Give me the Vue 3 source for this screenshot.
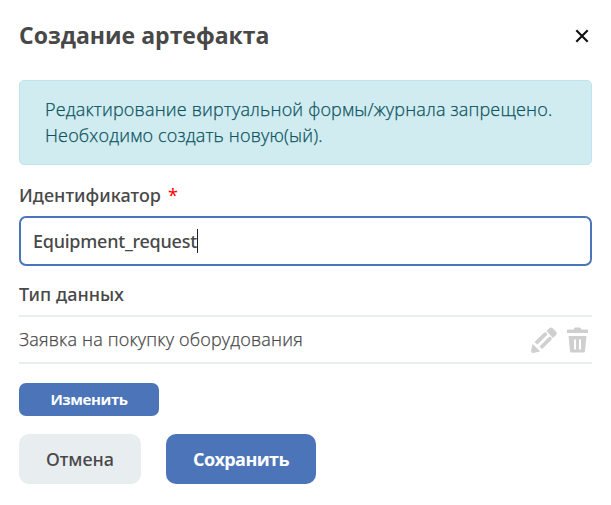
<script setup>
import { ref } from 'vue'
const notice = ['Редактирование виртуальной формы/журнала запрещено.', 'Необходимо создать новую(ый).']
const identifier = ref('Equipment_request')
</script>

<template>
  <main class="dialog">
    <header class="header">
      <h1 class="title">Создание артефакта</h1>
      <button class="close" aria-label="Закрыть">
        <svg width="14" height="14" viewBox="0 0 14 14"><path d="M1.3 1.3 12.700 12.700M12.700 1.3 1.3 12.700" fill="none" stroke="#111" stroke-width="2.1" /></svg>
      </button>
    </header>
    <div class="alert"><div v-for="line in notice" :key="line">{{ line }}</div></div>
    <div class="label"><span>Идентификатор</span><span class="required">*</span></div>
    <div class="field"><span class="value">{{ identifier }}</span><i class="caret"></i></div>
    <div class="label type">Тип данных</div>
    <div class="row">
      <span class="name">Заявка на покупку оборудования</span>
      <svg class="pencil" width="26" height="26" viewBox="0 0 26 26" fill="#cfcfcf">
        <path d="M15.500 4 18.500 1Q20 0 21.500 1L25.300 5Q26.400 6.500 25 8L22 11Z" />
        <path d="M3.500 15 13 5.700Q14.500 4.700 15.700 5.900Q16.700 7 15.700 8.300L6.500 17.500Z" />
        <path d="M8.500 19.500 17.700 10.300Q19.200 9.300 20.400 10.500Q21.300 11.700 20.300 12.900L11 22Z" />
        <path d="M1.500 17 3.500 18.700 7.300 22.500 9 24.500 2 26Q-.2 26 .2 23.500Z" />
      </svg>
      <svg class="trash" width="21" height="26" viewBox="0 0 21 26" fill="#cfcfcf">
        <path d="M1 2.500H7V1.500Q7 .5 8.500 .5H12.500Q14 .5 14 1.500V2.500H20Q21 2.500 21 3.500V6H0V3.500Q0 2.500 1 2.500Z" />
        <path fill-rule="evenodd" d="M1.500 9H19.500L18 24Q18 25.500 16.500 25.500H4.500Q3 25.500 3 24Z M7 12.500V22.500H9V12.500Z M12 12.500V22.500H14V12.500Z" />
      </svg>
    </div>
    <button class="change">Изменить</button>
    <footer class="actions"><button class="btn cancel">Отмена</button><button class="btn save">Сохранить</button></footer>
  </main>
</template>

<style>
body { background: #fff; }
</style>
<style scoped>
.dialog { box-sizing: border-box; height: 505px; padding: 18px 19px 0; font-family: "Open Sans", "Noto Sans", sans-serif; color: #484848; overflow: hidden; }
button { border: 0; padding: 0; font-family: inherit; }
.header { display: flex; justify-content: space-between; align-items: center; height: 36px; }
.title { margin: 0; font-size: 23px; font-weight: 700; line-height: 34px; padding-bottom: 2px; }
.close { display: flex; background: none; margin-right: 3px; }
.alert { box-sizing: border-box; height: 85px; margin-top: 26px; padding: 15px 25px; border: 1px solid #bee5eb; border-radius: 5px; background: #d1ecf1; color: #0c5460; font-size: 18px; font-weight: 300; line-height: 26px; letter-spacing: .16px; -webkit-text-stroke: .25px; white-space: nowrap; }
.label { display: flex; gap: 7px; height: 26px; margin-top: 17px; font-family: "Noto Sans", sans-serif; font-size: 18px; font-weight: 500; line-height: 26px; letter-spacing: .04px; }
.required { color: #f00; font-weight: 400; }
.field { box-sizing: border-box; display: flex; align-items: center; height: 50px; margin-top: 8px; padding: 0 12px; border: 2px solid #4b74b9; border-radius: 7px; font-family: "Noto Sans", sans-serif; font-size: 18px; font-weight: 500; letter-spacing: -.24px; }
.caret { width: 1px; height: 24px; background: #222; }
.type { margin-top: 15px; }
.row { box-sizing: border-box; display: flex; align-items: center; height: 49px; margin-top: 8px; border-top: 2px solid #e8edf0; border-bottom: 2px solid #e8edf0; font-size: 18px; font-weight: 300; }
.name { flex: 1; padding-bottom: 2px; letter-spacing: .17px; -webkit-text-stroke: .25px; }
.trash { margin: 0 4px 0 10px; }
.change { display: block; width: 140px; height: 33px; margin-top: 19px; padding-bottom: 1px; border-radius: 7px; background: #4b74b9; color: #fff; font-size: 15px; font-weight: 700; letter-spacing: -.4px; }
.actions { display: flex; gap: 25px; margin-top: 18px; }
.btn { height: 50px; border-radius: 10px; font-size: 18px; }
.cancel { width: 122px; background: #e8edf0; color: #484848; font-family: "Noto Sans", sans-serif; font-weight: 500; }
.save { width: 150px; background: #4b74b9; color: #fff; font-weight: 700; letter-spacing: -.6px; }
</style>
